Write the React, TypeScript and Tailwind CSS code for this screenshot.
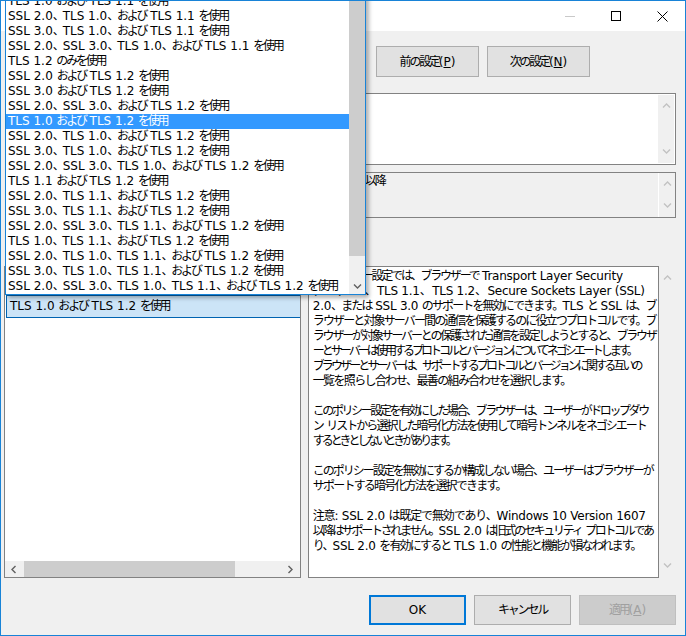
import React, { useLayoutEffect, useRef } from 'react';

const options = [
  'TLS 1.0 および TLS 1.1 を使用',
  'SSL 2.0、TLS 1.0、および TLS 1.1 を使用',
  'SSL 3.0、TLS 1.0、および TLS 1.1 を使用',
  'SSL 2.0、SSL 3.0、TLS 1.0、および TLS 1.1 を使用',
  'TLS 1.2 のみを使用',
  'SSL 2.0 および TLS 1.2 を使用',
  'SSL 3.0 および TLS 1.2 を使用',
  'SSL 2.0、SSL 3.0、および TLS 1.2 を使用',
  'TLS 1.0 および TLS 1.2 を使用',
  'SSL 2.0、TLS 1.0、および TLS 1.2 を使用',
  'SSL 3.0、TLS 1.0、および TLS 1.2 を使用',
  'SSL 2.0、SSL 3.0、TLS 1.0、および TLS 1.2 を使用',
  'TLS 1.1 および TLS 1.2 を使用',
  'SSL 2.0、TLS 1.1、および TLS 1.2 を使用',
  'SSL 3.0、TLS 1.1、および TLS 1.2 を使用',
  'SSL 2.0、SSL 3.0、TLS 1.1、および TLS 1.2 を使用',
  'TLS 1.0、TLS 1.1、および TLS 1.2 を使用',
  'SSL 2.0、TLS 1.0、TLS 1.1、および TLS 1.2 を使用',
  'SSL 3.0、TLS 1.0、TLS 1.1、および TLS 1.2 を使用',
  'SSL 2.0、SSL 3.0、TLS 1.0、TLS 1.1、および TLS 1.2 を使用',
];
const selected = 8;

// help text, wrapped the way the dialog wraps it, with each line's width
const help: [string, number][] = [
  ['このポリシー設定では、ブラウザーで Transport Layer Security', 310],
  ['(TLS) 1.0、TLS 1.1、TLS 1.2、Secure Sockets Layer (SSL)', 332],
  ['2.0、または SSL 3.0 のサポートを無効にできます。TLS と SSL は、ブ', 343],
  ['ラウザーと対象サーバー間の通信を保護するのに役立つプロトコルです。ブ', 343],
  ['ラウザーが対象サーバーとの保護された通信を設定しようとすると、ブラウザ', 343],
  ['ーとサーバーは使用するプロトコルとバージョンについてネゴシエートします。', 323],
  ['ブラウザーとサーバーは、サポートするプロトコルとバージョンに関する互いの', 328],
  ['一覧を照らし合わせ、最善の組み合わせを選択します。', 258],
  ['', 0],
  ['このポリシー設定を有効にした場合、ブラウザーは、ユーザーがドロップダウ', 335],
  ['ン リストから選択した暗号化方法を使用して暗号トンネルをネゴシエート', 333],
  ['するときとしないときがあります。', 142],
  ['', 0],
  ['このポリシー設定を無効にするか構成しない場合、ユーザーはブラウザーが', 340],
  ['サポートする暗号化方法を選択できます。', 193],
  ['', 0],
  ['注意: SSL 2.0 は既定で無効であり、Windows 10 Version 1607', 333],
  ['以降はサポートされません。SSL 2.0 は旧式のセキュリティ プロトコルであ', 340],
  ['り、SSL 2.0 を有効にすると TLS 1.0 の性能と機能が損なわれます。', 328],
];

const CJK = /([\u3000-\u30ff\u4e00-\u9fff\uff00-\uffef]+)/;

// Japanese runs are set tighter than the latin ones (like Meiryo UI)
const J = ({ t }: { t: string }) => (
  <>
    {t.split(CJK).map((s, i) =>
      i % 2 ? (
        <span key={i} className="tracking-[var(--ls)]">
          {s}
        </span>
      ) : (
        s
      )
    )}
  </>
);

// one help line, its japanese spacing tuned so the line ends where the dialog's does
const FitLine = ({ t, w }: { t: string; w: number }) => {
  const ref = useRef<HTMLSpanElement>(null);
  useLayoutEffect(() => {
    const el = ref.current;
    if (!el || !w) return;
    const n = t.split(CJK).filter((_, i) => i % 2).join('').length;
    if (!n) return;
    const fit = () => {
      el.style.setProperty('--ls', '-2.2px');
      const w0 = el.getBoundingClientRect().width;
      el.style.setProperty('--ls', `${-2.2 + (w - w0) / n}px`);
    };
    fit();
    document.fonts?.ready.then(fit);
  }, [t, w]);
  return (
    <div className="h-[15px] whitespace-nowrap">
      <span ref={ref} className="inline-block">
        <J t={t} />
      </span>
    </div>
  );
};

const Chevron = ({ dir, className }: { dir: 'up' | 'down' | 'left' | 'right'; className?: string }) => {
  const d = {
    up: 'M1 5.5 L4.5 2 L8 5.5',
    down: 'M1 2.5 L4.5 6 L8 2.5',
    left: 'M5.5 1 L2 4.5 L5.5 8',
    right: 'M2.5 1 L6 4.5 L2.5 8',
  }[dir];
  return (
    <svg width="9" height="9" viewBox="0 0 9 9" className={className}>
      <path d={d} fill="none" stroke="currentColor" strokeWidth="1.4" />
    </svg>
  );
};

const VScroll = ({ className }: { className?: string }) => (
  <div className={'flex flex-col items-center justify-between py-[7px] text-[#c2c2c2] ' + (className || '')}>
    <Chevron dir="up" />
    <Chevron dir="down" />
  </div>
);

export default function App() {
  return (
    <div className="relative w-[686px] h-[636px] overflow-hidden border border-[#1883d7] bg-[#f0f0f0] text-[12px] text-black [--ls:-2.2px] font-['DejaVu_Sans','Noto_Sans_CJK_JP',sans-serif]">
      {/* title bar */}
      <div className="h-[30px] bg-white flex justify-end">
        <div className="w-[46px] flex items-center justify-center">
          <div className="w-[10px] h-px bg-[#c9c9c9]" />
        </div>
        <div className="w-[46px] flex items-center justify-center">
          <div className="w-[10px] h-[10px] border border-black" />
        </div>
        <div className="w-[46px] flex items-center justify-center">
          <svg width="11" height="11" viewBox="0 0 11 11">
            <path d="M0.5 0.5 L10.5 10.5 M10.5 0.5 L0.5 10.5" stroke="black" strokeWidth="1" />
          </svg>
        </div>
      </div>

      {/* body */}
      <div className="flex flex-col pr-[9px]">
        <div className="flex gap-[8px] pl-[375px] pt-[15px]">
          <button className="w-[103px] h-[31px] bg-[#e1e1e1] border border-[#adadad]">
            <J t="前の設定" />(<span className="underline">P</span>)
          </button>
          <button className="w-[103px] h-[31px] bg-[#e1e1e1] border border-[#adadad]">
            <J t="次の設定" />(<span className="underline">N</span>)
          </button>
        </div>

        {/* comment */}
        <div className="ml-[200px] mt-[16px] h-[72px] bg-white border border-[#828282] flex justify-end">
          <VScroll className="w-[16px] bg-[#f0f0f0] my-px mr-px" />
        </div>

        {/* supported on */}
        <div className="ml-[200px] mt-[7px] h-[46px] border border-[#828282] flex">
          <div className="flex-1 pl-[163px] pt-[1px] leading-[15px]">
            <J t="以降" />
          </div>
          <VScroll className="w-[17px] border-l border-white" />
        </div>

        {/* options / help */}
        <div className="mt-[48px] flex">
          <div className="ml-[3px] w-[299px] h-[312px] bg-white border border-[#828282] flex flex-col overflow-hidden">
            <div className="mt-[28px] ml-px w-[340px] h-[23px] bg-[#cce4f7] border border-[#0063b1] pl-[3px] leading-[21px] whitespace-nowrap">
              <J t="TLS 1.0 および TLS 1.2 を使用" />
            </div>
            <div className="flex-1" />
            <div className="h-[16px] bg-[#f0f0f0] flex items-center text-[#606060]">
              <div className="w-[19px] flex justify-center">
                <Chevron dir="left" />
              </div>
              <div className="w-[211px] h-full bg-[#cdcdcd]" />
              <div className="flex-1" />
              <div className="w-[19px] flex justify-center">
                <Chevron dir="right" />
              </div>
            </div>
          </div>
          <div className="ml-[7px] w-[354px] h-[312px] bg-white border border-[#828282] pl-[4px] pt-[2px] leading-[15px] tracking-[-0.25px] overflow-hidden">
            {help.map(([l, w], i) => (
              <FitLine key={i} t={l} w={w} />
            ))}
          </div>
          <VScroll className="w-[17px] h-[312px] py-[8px]" />
        </div>

        {/* dialog buttons */}
        <div className="mt-[17px] flex justify-end gap-[8px]">
          <button className="w-[97px] h-[30px] bg-[#e1e1e1] border-2 border-[#0078d7]">OK</button>
          <button className="w-[97px] h-[30px] bg-[#e1e1e1] border border-[#adadad]">
            <J t="キャンセル" />
          </button>
          <button className="w-[97px] h-[30px] bg-[#cccccc] border border-[#bfbfbf] text-[#a0a0a0]">
            <J t="適用" />(<span className="underline">A</span>)
          </button>
        </div>
      </div>

      {/* open drop-down list */}
      <div className="absolute left-[4px] top-[-8px] w-[361px] h-[302px] bg-white border border-[#1883d7] shadow-[3px_3px_4px_rgba(0,0,0,0.3)] flex">
        <div className="w-[343px] flex flex-col">
          {options.map((o, i) => (
            <div
              key={i}
              className={
                'h-[15px] leading-[15px] pl-[2px] whitespace-nowrap ' +
                (i === selected ? 'bg-[#3399ff] text-white' : '')
              }
            >
              <J t={o} />
            </div>
          ))}
        </div>
        <div className="flex-1 bg-[#f0f0f0] flex flex-col">
          <div className="h-[262px] bg-[#cdcdcd]" />
          <div className="flex-1" />
          <div className="h-[16px] flex items-center justify-center text-[#606060]">
            <Chevron dir="down" />
          </div>
        </div>
      </div>
    </div>
  );
}
